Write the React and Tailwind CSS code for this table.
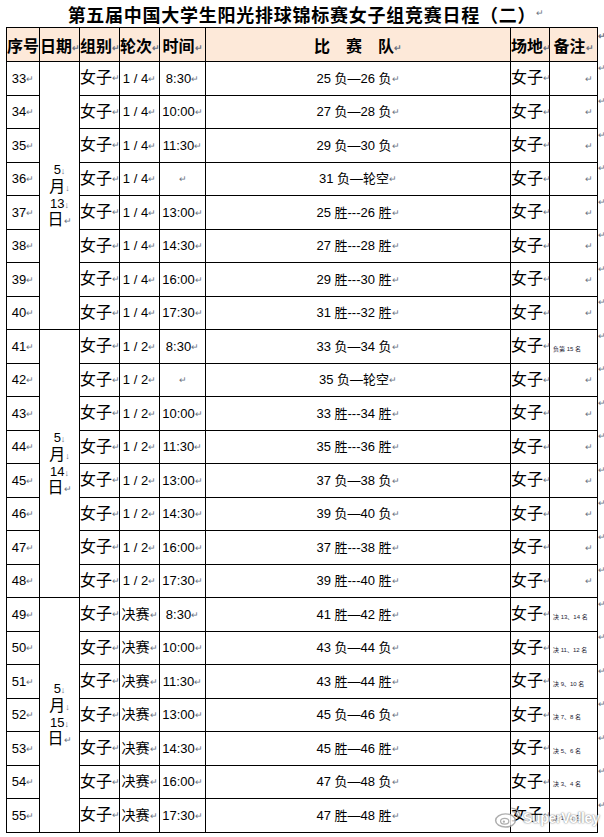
import React from 'react';

const rows = [
  { n: 33, round: '1 / 4', time: '8:30', match: '25 负—26 负' },
  { n: 34, round: '1 / 4', time: '10:00', match: '27 负—28 负' },
  { n: 35, round: '1 / 4', time: '11:30', match: '29 负—30 负' },
  { n: 36, round: '1 / 4', time: '', match: '31 负—轮空' },
  { n: 37, round: '1 / 4', time: '13:00', match: '25 胜---26 胜' },
  { n: 38, round: '1 / 4', time: '14:30', match: '27 胜---28 胜' },
  { n: 39, round: '1 / 4', time: '16:00', match: '29 胜---30 胜' },
  { n: 40, round: '1 / 4', time: '17:30', match: '31 胜---32 胜' },
  { n: 41, round: '1 / 2', time: '8:30', match: '33 负—34 负', note: '负第 15 名' },
  { n: 42, round: '1 / 2', time: '', match: '35 负—轮空' },
  { n: 43, round: '1 / 2', time: '10:00', match: '33 胜---34 胜' },
  { n: 44, round: '1 / 2', time: '11:30', match: '35 胜---36 胜' },
  { n: 45, round: '1 / 2', time: '13:00', match: '37 负—38 负' },
  { n: 46, round: '1 / 2', time: '14:30', match: '39 负—40 负' },
  { n: 47, round: '1 / 2', time: '16:00', match: '37 胜---38 胜' },
  { n: 48, round: '1 / 2', time: '17:30', match: '39 胜---40 胜' },
  { n: 49, round: '决赛', time: '8:30', match: '41 胜—42 胜', note: '决 13、14 名' },
  { n: 50, round: '决赛', time: '10:00', match: '43 负—44 负', note: '决 11、12 名' },
  { n: 51, round: '决赛', time: '11:30', match: '43 胜—44 胜', note: '决 9、10 名' },
  { n: 52, round: '决赛', time: '13:00', match: '45 负—46 负', note: '决 7、8 名' },
  { n: 53, round: '决赛', time: '14:30', match: '45 胜—46 胜', note: '决 5、6 名' },
  { n: 54, round: '决赛', time: '16:00', match: '47 负—48 负', note: '决 3、4 名' },
  { n: 55, round: '决赛', time: '17:30', match: '47 胜—48 胜', note: '决 1、2 名' },
];

const dates = { 0: '13', 8: '14', 16: '15' };

const Mark = ({ c = '↵' }) => (
  <span className="text-[9px] text-gray-500 align-middle">{c}</span>
);

const cell = 'border border-black p-0 text-center align-middle whitespace-nowrap';

function Watermark() {
  return (
    <div className="absolute left-[494px] top-[806px] flex items-center gap-[1px] opacity-80">
      <svg width="28" height="24" viewBox="0 0 34 28">
        <ellipse cx="14" cy="17" rx="12" ry="8" fill="#fff" stroke="#9a9a9a" strokeWidth="1.8" />
        <ellipse cx="13" cy="18" rx="5" ry="3.5" fill="none" stroke="#9a9a9a" strokeWidth="1.5" />
        <circle cx="12" cy="18.5" r="1.4" fill="#9a9a9a" />
        <path d="M22 6 a7 7 0 0 1 7 7" fill="none" stroke="#9a9a9a" strokeWidth="1.8" />
        <path d="M21 2 a11 11 0 0 1 11 11" fill="none" stroke="#9a9a9a" strokeWidth="1.8" />
      </svg>
      <span className="text-[14px] font-bold tracking-[-0.3px] text-white [text-shadow:0_0_2px_#777,0_0_1px_#777] font-['Liberation_Sans',sans-serif]">
        SuperVolley
      </span>
    </div>
  );
}

export default function App() {
  return (
    <div className="relative w-[604px] h-[837px] overflow-hidden bg-white text-black font-['Liberation_Sans','Noto_Sans_CJK_SC',sans-serif]">
      <div className="h-[27px] flex items-center justify-center pl-[8px]">
        <span className="text-[18px] font-bold tracking-[0.75px] font-['Noto_Sans_CJK_SC',sans-serif] leading-none">
          第五届中国大学生阳光排球锦标赛女子组竞赛日程（二）
        </span>
        <Mark />
      </div>
      <table className="ml-[6px] border-collapse table-fixed w-[598px]">
        <colgroup>
          <col className="w-[33px]" />
          <col className="w-[40px]" />
          <col className="w-[40px]" />
          <col className="w-[40px]" />
          <col className="w-[46px]" />
          <col className="w-[305px]" />
          <col className="w-[39px]" />
          <col className="w-[48px]" />
          <col className="w-[7px]" />
        </colgroup>
        <thead>
          <tr className="h-[34px] bg-[#fde9d9] text-[16px] font-bold font-['Noto_Sans_CJK_SC',sans-serif]">
            <th className={cell}>序号</th>
            <th className={cell}>日期<Mark /></th>
            <th className={cell}>组别<Mark /></th>
            <th className={cell}>轮次<Mark /></th>
            <th className={cell}>时间<Mark /></th>
            <th className={cell}>比　赛　队<Mark /></th>
            <th className={cell}>场地<Mark /></th>
            <th className={cell}>备注<Mark /></th>
            <th className="p-0 align-top bg-white text-left leading-[10px]"><Mark /></th>
          </tr>
        </thead>
        <tbody>
          {rows.map((r, i) => (
            <tr key={r.n} className="h-[33.5px] text-[13px]">
              <td className={cell}>{r.n}<Mark /></td>
              {dates[i] !== undefined && (
                <td rowSpan={i === 16 ? 7 : 8} className={cell}>
                  <div className="flex flex-col items-center leading-[16px]">
                    <span>5<Mark c="↓" /></span>
                    <span className="text-[16px]">月<Mark c="↓" /></span>
                    <span>{dates[i]}<Mark c="↓" /></span>
                    <span className="text-[16px]">日<Mark /></span>
                  </div>
                </td>
              )}
              <td className={cell + ' text-[16px]'}>女子<Mark /></td>
              <td className={cell + (r.round === '决赛' ? ' text-[14px]' : '')}>{r.round}<Mark /></td>
              <td className={cell}>{r.time}<Mark /></td>
              <td className={cell}>{r.match}<Mark /></td>
              <td className={cell + ' text-[16px]'}>女子<Mark /></td>
              <td className={cell + (r.note ? ' text-left pl-[3px]' : ' text-right pr-[4px]')}>
                {r.note ? <span className="text-[6px] text-[#223]">{r.note}</span> : <Mark />}
              </td>
              <td className="p-0 align-top text-left leading-[10px]"><Mark /></td>
            </tr>
          ))}
        </tbody>
      </table>
      <Watermark />
    </div>
  );
}
